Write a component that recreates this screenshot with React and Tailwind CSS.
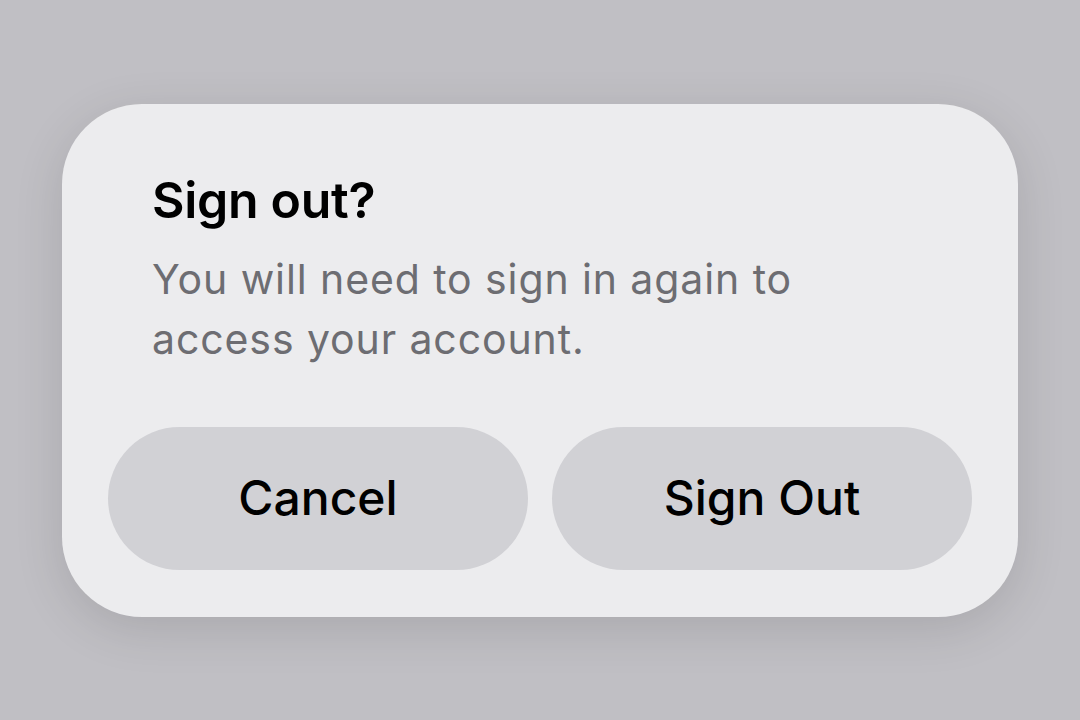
import React from 'react';

export default function App() {
  return (
    <div
      className="w-[1080px] h-[720px] bg-[#c0bfc4] flex items-center justify-center"
      style={{ fontFamily: 'Inter, "Noto Sans", sans-serif' }}
    >
      <div className="w-[956px] rounded-[80px] bg-[#ececee] shadow-[0_12px_50px_rgba(0,0,0,0.12)] pt-[66px] pb-[47px] px-[46px]">
        <div className="px-[44px]">
          <h2 className="text-[50px] leading-[60px] font-semibold text-black tracking-[-0.3px]">Sign out?</h2>
          <p className="mt-[19px] text-[41px] leading-[60px] text-[#6d6d72] tracking-[0.9px] w-[700px]">
            You will need to sign in again to access your account.
          </p>
        </div>

        <div className="mt-[58px] grid grid-cols-2 gap-[24px]">
          <button className="h-[143px] rounded-full bg-[#d1d1d5] text-[48px] font-medium text-black">
            Cancel
          </button>
          <button className="h-[143px] rounded-full bg-[#d1d1d5] text-[48px] font-medium text-black">
            Sign Out
          </button>
        </div>
      </div>
    </div>
  );
}
